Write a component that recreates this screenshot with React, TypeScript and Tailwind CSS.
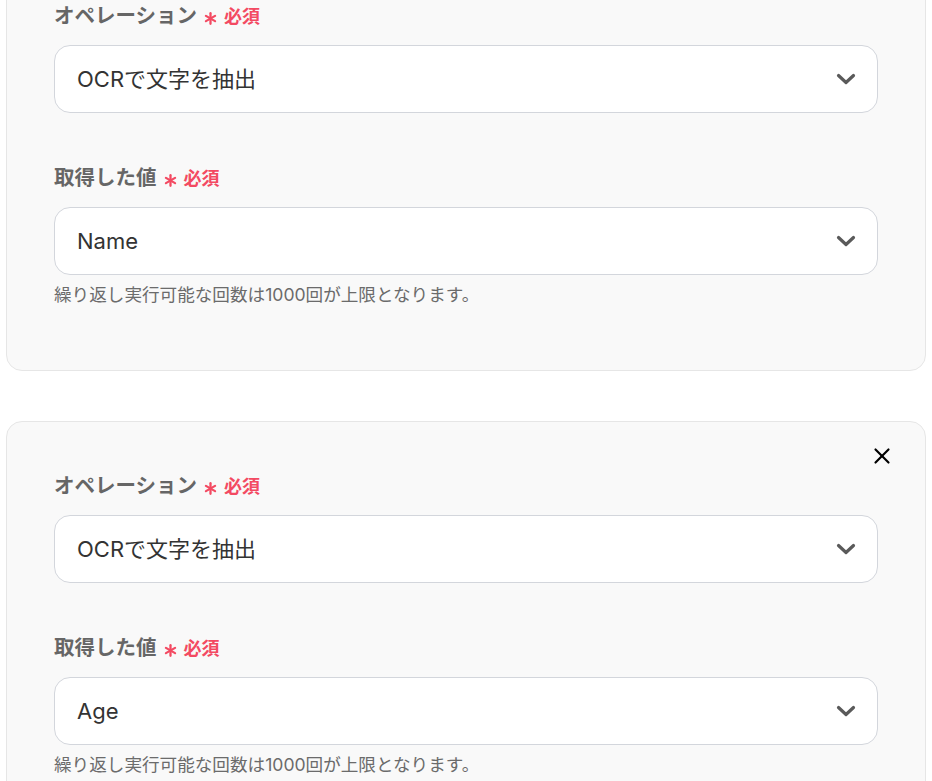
import { Asterisk, X } from "lucide-react";

const FONT = { fontFamily: 'Inter, "Noto Sans CJK JP", sans-serif' };

type Item = { operation: string; value: string; removable: boolean };

const ITEMS: Item[] = [
  { operation: "OCRで文字を抽出", value: "Name", removable: false },
  { operation: "OCRで文字を抽出", value: "Age", removable: true },
];

function FieldLabel({ children }: { children: string }) {
  return (
    <div className="mb-[14px] flex h-[30px] items-center gap-[3px]">
      <span className="text-[20.5px] font-bold text-[#666666]">{children}</span>
      <span className="flex items-center gap-[3px] text-[#f34a62]">
        <Asterisk className="mt-[5px] h-[21px] w-[21px]" strokeWidth={2.6} />
        <span className="text-[18px] font-bold">必須</span>
      </span>
    </div>
  );
}

function Chevron() {
  return (
    <svg width="20" height="20" viewBox="0 0 20 20" fill="none" className="text-[#5a5a5a]">
      <polyline
        points="2.5,6.5 10,13.5 17.5,6.5"
        stroke="currentColor"
        strokeWidth="3.2"
        strokeLinecap="round"
        strokeLinejoin="round"
      />
    </svg>
  );
}

function SelectBox({ value }: { value: string }) {
  return (
    <div className="flex h-[68px] items-center justify-between rounded-2xl border border-[#d3d6dc] bg-white pl-[22px] pr-[21px]">
      <span className="text-[22px] text-[#333333]">{value}</span>
      <Chevron />
    </div>
  );
}

function OperationCard({ item }: { item: Item }) {
  return (
    <div className="relative rounded-2xl border border-[#e6e6e6] bg-[#f9f9f9] px-[47px] pb-[63px] pt-[49px]">
      {item.removable && (
        <button className="absolute right-[30px] top-[21px] text-black" aria-label="削除">
          <X className="h-[26px] w-[26px]" strokeWidth={2} />
        </button>
      )}
      <FieldLabel>オペレーション</FieldLabel>
      <SelectBox value={item.operation} />
      <div className="mt-[50px]">
        <FieldLabel>取得した値</FieldLabel>
        <SelectBox value={item.value} />
        <p className="mt-[8px] text-[17.6px] leading-[24px] text-[#6b6b6b]">
          繰り返し実行可能な回数は1000回が上限となります。
        </p>
      </div>
    </div>
  );
}

export default function App() {
  return (
    <div className="h-[781px] overflow-hidden bg-white" style={FONT}>
      <div className="-mt-[49px] flex flex-col gap-[50px] px-[6px]">
        {ITEMS.map((item, i) => (
          <OperationCard key={i} item={item} />
        ))}
      </div>
    </div>
  );
}
